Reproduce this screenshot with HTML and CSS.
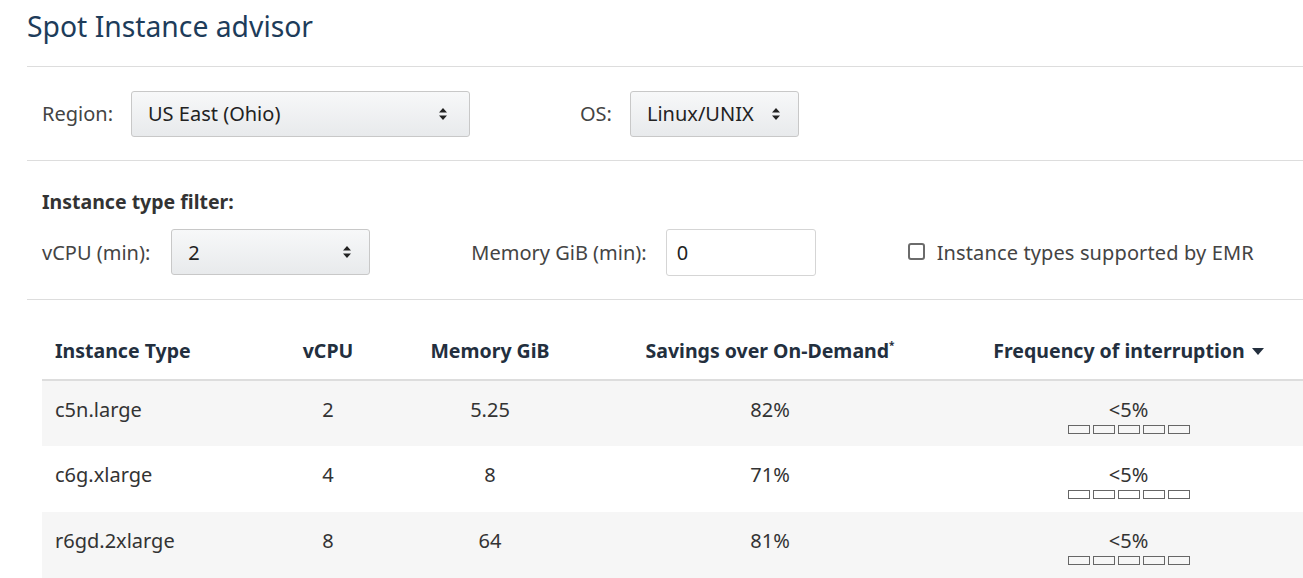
FILE: index.html
```html
<!DOCTYPE html>
<html lang="en">
<head>
<meta charset="utf-8">
<title>Spot Instance advisor</title>
<link rel="stylesheet" href="styles.css">
</head>
<body>
<div class="page">
  <h1 class="title">Spot Instance advisor</h1>

  <div class="section region-row">
    <span class="label">Region:</span>
    <div class="select select-region"><span>US East (Ohio)</span><svg class="arrows" width="8" height="12" viewBox="0 0 8 12"><path d="M4 0 L8 4.5 H0 Z M0 7.5 H8 L4 12 Z" fill="#222"/></svg></div>
    <span class="label label-os">OS:</span>
    <div class="select select-os"><span>Linux/UNIX</span><svg class="arrows" width="8" height="12" viewBox="0 0 8 12"><path d="M4 0 L8 4.5 H0 Z M0 7.5 H8 L4 12 Z" fill="#222"/></svg></div>
  </div>

  <div class="section filter">
    <div class="filter-title">Instance type filter:</div>
    <div class="filter-row">
      <span class="label">vCPU (min):</span>
      <div class="select select-vcpu"><span>2</span><svg class="arrows" width="8" height="12" viewBox="0 0 8 12"><path d="M4 0 L8 4.5 H0 Z M0 7.5 H8 L4 12 Z" fill="#222"/></svg></div>
      <span class="label label-mem">Memory GiB (min):</span>
      <div class="input">0</div>
      <span class="checkbox"></span>
      <span class="label label-emr">Instance types supported by EMR</span>
    </div>
  </div>

  <table class="grid">
    <thead>
      <tr>
        <th class="c-type">Instance Type</th>
        <th class="c-vcpu">vCPU</th>
        <th class="c-mem">Memory GiB</th>
        <th class="c-save">Savings over On-Demand<sup>*</sup></th>
        <th class="c-freq">Frequency of interruption <svg class="caret" width="12" height="7" viewBox="0 0 12 7"><path d="M0 0 H12 L6 7 Z" fill="#232f3e"/></svg></th>
      </tr>
    </thead>
    <tbody>
      <tr class="odd">
        <td class="c-type">c5n.large</td><td>2</td><td>5.25</td><td>82%</td>
        <td><div class="freq">&lt;5%</div><div class="bars"><i></i><i></i><i></i><i></i><i></i></div></td>
      </tr>
      <tr>
        <td class="c-type">c6g.xlarge</td><td>4</td><td>8</td><td>71%</td>
        <td><div class="freq">&lt;5%</div><div class="bars"><i></i><i></i><i></i><i></i><i></i></div></td>
      </tr>
      <tr class="odd">
        <td class="c-type">r6gd.2xlarge</td><td>8</td><td>64</td><td>81%</td>
        <td><div class="freq">&lt;5%</div><div class="bars"><i></i><i></i><i></i><i></i><i></i></div></td>
      </tr>
    </tbody>
  </table>
</div>
</body>
</html>
```

FILE: styles.css
```css
html, body {
  margin: 0;
  padding: 0;
  background: #fff;
}
body {
  font-family: "Noto Sans", "Open Sans", sans-serif;
  color: #333;
  overflow: hidden;
}
.page {
  padding-left: 27px;
}
.title {
  margin: 0;
  height: 67px;
  box-sizing: border-box;
  padding-top: 6px;
  line-height: 40px;
  font-size: 28.3px;
  font-weight: 400;
  color: #1d3c5a;
  border-bottom: 1px solid #dddddd;
}
.section {
  border-bottom: 1px solid #dddddd;
}
.region-row {
  display: flex;
  align-items: center;
  height: 93px;
  padding-left: 15px;
}
.label {
  font-size: 20px;
  color: #444;
  white-space: nowrap;
}
.select {
  display: flex;
  align-items: center;
  justify-content: space-between;
  box-sizing: border-box;
  height: 46px;
  border: 1px solid #c8c8c8;
  border-radius: 3px;
  background: linear-gradient(#f7f8f9, #e8eaec);
  font-size: 20px;
  color: #222;
  margin-left: 18px;
  flex: none;
}
.select-region {
  width: 339px;
  padding: 0 22px 0 16px;
}
.label-os {
  margin-left: 110px;
}
.select-os {
  width: 169px;
  padding: 0 18px 0 16px;
}
.arrows {
  display: block;
}
.filter {
  height: 139px;
  padding-left: 15px;
  box-sizing: border-box;
  padding-top: 29px;
}
.filter-title {
  font-size: 19.5px;
  font-weight: 700;
  color: #333;
  line-height: 24px;
  height: 24px;
}
.filter-row {
  display: flex;
  align-items: center;
  margin-top: 14px;
  height: 48px;
}
.select-vcpu {
  width: 199px;
  padding: 0 18px 0 16px;
  margin-left: 21px;
}
.label-mem {
  margin-left: 101px;
}
.input {
  box-sizing: border-box;
  width: 150px;
  height: 47px;
  margin-left: 19px;
  border: 1px solid #d5d5d5;
  border-radius: 3px;
  display: flex;
  align-items: center;
  padding-left: 10px;
  font-size: 20px;
  color: #222;
  flex: none;
}
.checkbox {
  box-sizing: border-box;
  width: 17px;
  height: 17px;
  border: 2px solid #6b6b6b;
  border-radius: 3px;
  margin-left: 92px;
  margin-top: -1px;
  flex: none;
}
.label-emr {
  margin-left: 12px;
  letter-spacing: 0.12px;
}
.grid {
  margin-left: 15px;
  width: 1261px;
  border-collapse: collapse;
  table-layout: fixed;
  margin-top: 22px;
}
.grid th {
  height: 57px;
  padding: 0;
  font-size: 19.5px;
  font-weight: 700;
  color: #232f3e;
  text-align: center;
  vertical-align: middle;
  border-bottom: 2px solid #dddddd;
  white-space: nowrap;
}
.grid th sup {
  font-size: 10px;
  vertical-align: 9px;
  line-height: 0;
}
.grid .c-type {
  text-align: left;
  padding-left: 13px;
}
.c-type { width: 207px; }
.c-vcpu { width: 132px; }
.c-mem { width: 192px; }
.c-save { width: 368px; }
.c-freq { width: 349px; }
.caret {
  margin-left: 2px;
  vertical-align: 3px;
}
.grid td {
  height: 66px;
  box-sizing: border-box;
  padding: 16px 0 0;
  vertical-align: top;
  text-align: center;
  font-size: 20px;
  line-height: 26px;
  color: #333;
}
.grid tr.odd td {
  background: #f6f6f6;
}
.freq {
  line-height: 26px;
}
.bars {
  display: flex;
  justify-content: center;
  gap: 3px;
  margin-top: 2px;
}
.bars i {
  display: block;
  box-sizing: border-box;
  width: 22px;
  height: 9px;
  border: 1px solid #666;
}
```
